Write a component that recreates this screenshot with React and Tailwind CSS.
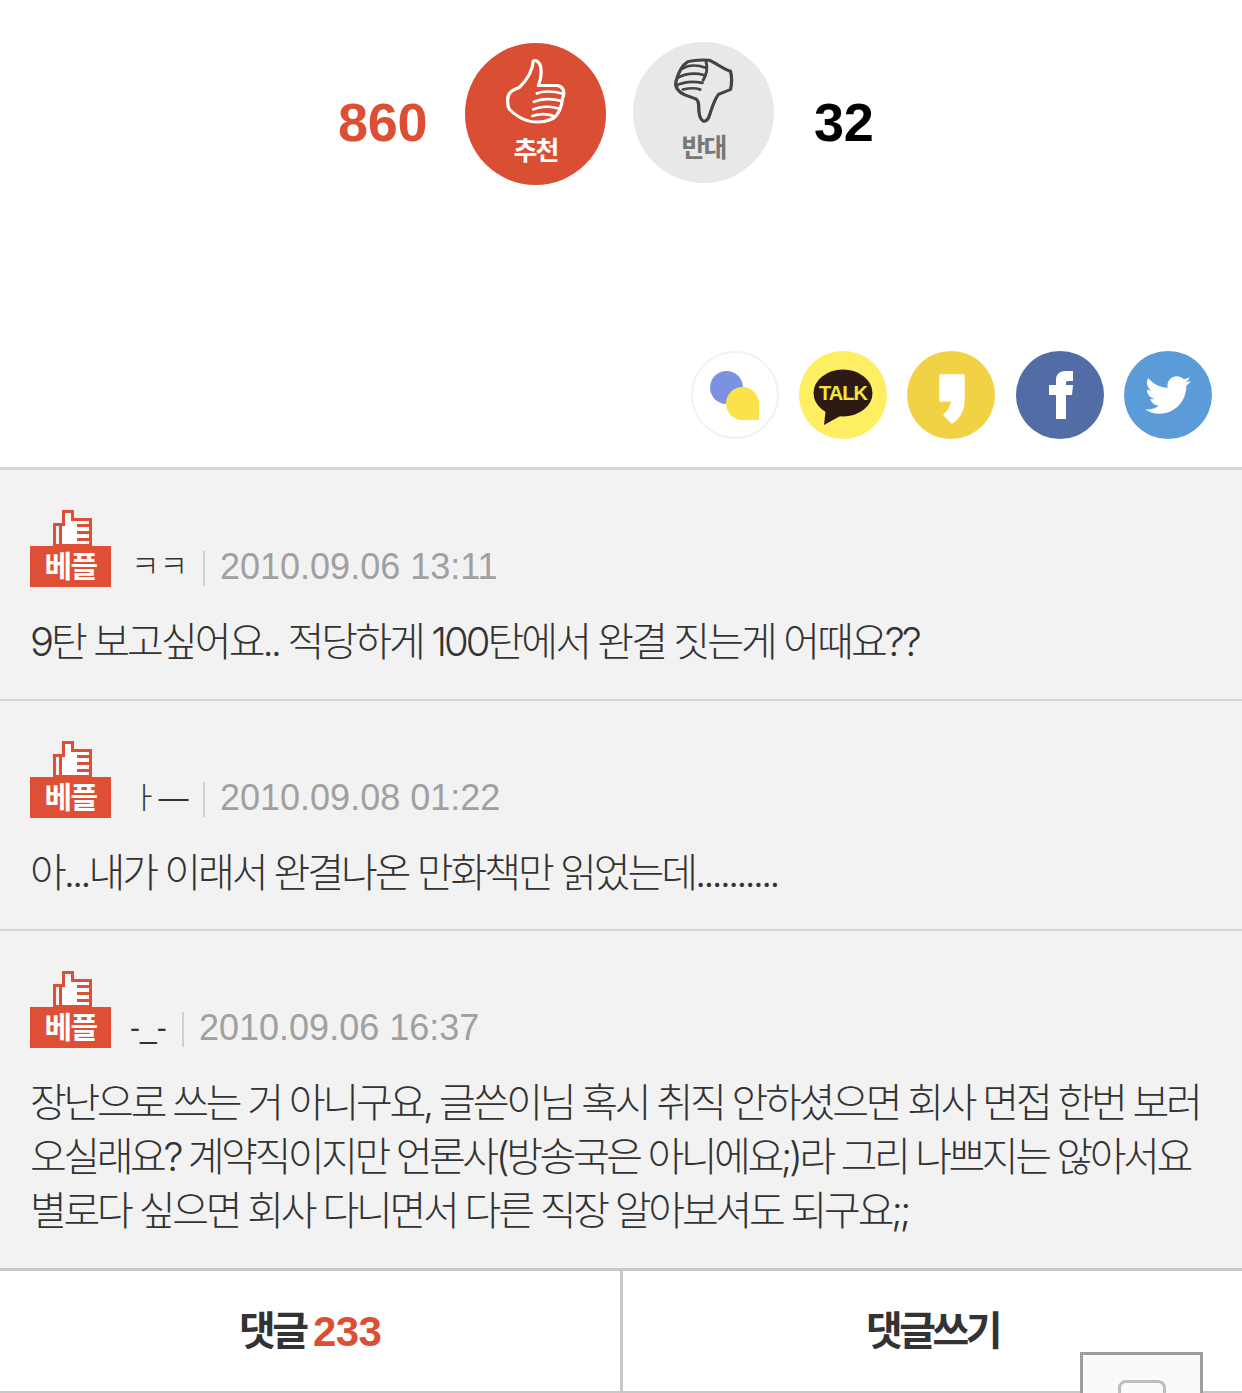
import React from "react";
import { FaTwitter } from "react-icons/fa";

const KR = "[font-family:'Liberation_Sans','Noto_Sans_CJK_KR',sans-serif]";
const BODY = "[font-family:'Inter','Noto_Sans_CJK_KR',sans-serif]";

function ThumbUp() {
  return (
    <svg viewBox="510 80 175 205" preserveAspectRatio="none" className="w-[64px] h-[68px]" fill="none" stroke="#fff" strokeWidth="9" strokeLinejoin="round" strokeLinecap="round">
      <path d="M520 215C518 190 530 180 552 172C572 150 588 125 590 92C598 88 606 95 610 108C614 130 610 150 604 166L655 166C672 168 678 185 670 205C668 230 662 250 645 265C625 275 600 278 582 274C560 270 535 250 525 238C520 230 520 222 520 215Z" />
      <path d="M600 190C615 182 645 182 668 190M592 215C612 205 645 205 665 212M590 238C610 228 640 228 660 235M588 258C605 250 630 250 645 258" strokeWidth="8" />
    </svg>
  );
}

function ThumbDown() {
  return (
    <svg viewBox="975 82 175 205" preserveAspectRatio="none" className="w-[64px] h-[68px]" fill="none" stroke="#444" strokeWidth="9" strokeLinejoin="round" strokeLinecap="round">
      <path d="M1060 275C1052 270 1048 255 1048 232C1048 220 1046 212 1040 208L1010 196C992 188 982 172 986 155C992 130 1000 108 1018 96C1040 90 1062 90 1078 92C1095 100 1115 118 1135 125C1140 145 1138 165 1135 180L1102 195C1088 215 1082 245 1075 265C1070 274 1065 277 1060 275Z" />
      <path d="M1068 95C1072 112 1070 135 1060 152M1002 118C1020 105 1045 105 1066 114M990 145C1015 130 1040 130 1062 136M986 168C1010 155 1035 155 1058 160M1005 180C1025 175 1040 175 1052 180" strokeWidth="8" />
    </svg>
  );
}

function Best() {
  return (
    <div className="flex flex-col items-center w-[81px] shrink-0">
      <svg viewBox="0 0 40 36" className="ml-[3px] w-[40px] h-[36px] block" shapeRendering="crispEdges">
        <path d="M2 35V14H8V35Z" fill="none" stroke="#de4f36" strokeWidth="3" />
        <path d="M8 14H11V1H20V9H38V35H8Z" fill="#fff" stroke="#de4f36" strokeWidth="3" />
        <path d="M25 15H38M25 22H38M25 29H38" stroke="#de4f36" strokeWidth="3" />
      </svg>
      <div className={`w-[81px] h-[41px] bg-[#de4f36] text-white text-[30px] font-bold leading-[41px] text-center tracking-[-1.5px] ${KR}`}>베플</div>
    </div>
  );
}

function Comment({ nick, nickClass, date, sepClass, boxClass, bodyClass, children }) {
  return (
    <div className={`bg-[#f2f2f2] border-[#d4d4d4] px-[30px] pt-[40px] ${boxClass}`}>
      <div className="flex items-end">
        <Best />
        <span className={`text-[#333] leading-[40px] font-light whitespace-nowrap ${nickClass} ${KR}`}>{nick}</span>
        <span className={`w-[2px] h-[35px] bg-[#cfcfcf] mb-[1px] ${sepClass}`} />
        <span className="text-[#a0a0a0] text-[36px] leading-[40px] font-['Liberation_Sans',sans-serif] ml-[15px]">{date}</span>
      </div>
      <p className={`mt-[28px] text-[#333] text-[40px] leading-[54px] font-light whitespace-nowrap ${bodyClass} ${BODY}`}>{children}</p>
    </div>
  );
}

export default function App() {
  return (
    <div className={`relative w-[1242px] h-[1393px] overflow-hidden bg-white ${KR}`}>
      <div className="h-[467px] flex flex-col border-b-[3px] border-[#d8d8d8] box-content">
        <div className="flex items-start pt-[42px] pl-[338px]">
          <span className="mt-[50px] w-[90px] text-[54px] leading-[60px] font-bold text-[#dc4f35] font-['Liberation_Sans',sans-serif] tracking-[-0.3px]">860</span>
          <div className="ml-[37px] mt-[1px] w-[141px] h-[142px] rounded-full bg-[#da4e33] flex flex-col items-center pt-[14px]">
            <ThumbUp />
            <span className="mt-[10px] text-white text-[26px] leading-[32px] font-bold tracking-[-2px]">추천</span>
          </div>
          <div className="ml-[27px] w-[141px] h-[141px] rounded-full bg-[#e8e8e8] flex flex-col items-center pt-[15px]">
            <ThumbDown />
            <span className="mt-[7px] text-[#777] text-[26px] leading-[32px] font-bold tracking-[-2px]">반대</span>
          </div>
          <span className="ml-[40px] mt-[50px] text-[54px] leading-[60px] font-bold text-black font-['Liberation_Sans',sans-serif] tracking-[-0.3px]">32</span>
        </div>

        <div className="mt-auto mb-[28px] flex justify-end gap-[20px] pr-[30px]">
          <div className="relative w-[88px] h-[88px] rounded-full bg-white border-2 border-[#f1f1f1]">
            <span className="absolute left-[17px] top-[18px] w-[33px] h-[33px] rounded-full bg-[#7b92e2]" />
            <span className="absolute left-[33px] top-[34px] w-[33px] h-[33px] rounded-full rounded-br-[4px] bg-[#fae24a]" />
          </div>
          <div className="relative w-[88px] h-[88px] rounded-full bg-[#fdee62] flex items-center justify-center">
            <svg viewBox="0 0 60 56" className="absolute left-[14px] top-[18px] w-[60px] h-[56px]">
              <ellipse cx="30" cy="24" rx="29.5" ry="23.5" fill="#2d1a14" />
              <path d="M13 38L11 56L29 46Z" fill="#2d1a14" />
            </svg>
            <span className="relative -mt-[4px] text-[#f5e53f] text-[20px] leading-none font-bold tracking-[-1px] font-['Liberation_Sans',sans-serif]">TALK</span>
          </div>
          <div className="mr-[1px] w-[88px] h-[88px] rounded-full bg-[#f2d245] flex items-center justify-center">
            <svg viewBox="0 0 88 88" className="w-[88px] h-[88px]">
              <path d="M33 24H57V48C57 60 51 68 45 72L37 64C41 60 44 56 45 50H33Z" fill="#fff" stroke="#fff" strokeWidth="1.5" strokeLinejoin="round" />
            </svg>
          </div>
          <div className="w-[88px] h-[88px] rounded-full bg-[#526ca6]">
            <svg viewBox="0 0 88 88" className="w-[88px] h-[88px]">
              <path d="M40 68V44H33V34H40V29C40 23 44 20 50 20H57V30H52C50 30 50 31 50 33V34H57L56 44H50V68Z" fill="#fff" />
            </svg>
          </div>
          <div className="w-[88px] h-[88px] rounded-full bg-[#5b9bd8] flex items-center justify-center">
            <FaTwitter className="text-white w-[46px] h-[46px]" />
          </div>
        </div>
      </div>

      <Comment nick="ㅋㅋ" nickClass="text-[31px] ml-[20px] w-[54px]" sepClass="ml-[18px]" date="2010.09.06 13:11" boxClass="h-[231px] border-b-[2px]" bodyClass="tracking-[-2.95px]">
        9탄 보고싶어요.. 적당하게 100탄에서 완결 짓는게 어때요??
      </Comment>
      <Comment nick="ㅏ—" nickClass="text-[30px] ml-[20px] w-[52px]" sepClass="ml-[20px]" date="2010.09.08 01:22" boxClass="h-[230px] border-b-[2px]" bodyClass="tracking-[-3.05px]">
        아...내가 이래서 완결나온 만화책만 읽었는데..........
      </Comment>
      <Comment nick="-_-" nickClass="text-[30px] ml-[19px] w-[36px]" sepClass="ml-[16px]" date="2010.09.06 16:37" boxClass="h-[337px]" bodyClass="tracking-[-3.25px]">
        장난으로 쓰는 거 아니구요, 글쓴이님 혹시 취직 안하셨으면 회사 면접 한번 보러
        <br />
        <span className="tracking-[-3.45px]">오실래요? 계약직이지만 언론사(방송국은 아니에요;)라 그리 나쁘지는 않아서요</span>
        <br />
        별로다 싶으면 회사 다니면서 다른 직장 알아보셔도 되구요;;
      </Comment>

      <div className="h-[125px] flex bg-white border-t-[3px] border-b-[2px] border-[#c8c8c8]">
        <div className="w-[620px] flex items-center justify-center text-[40px] font-bold text-[#333] tracking-[-3.5px]">
          댓글&nbsp;<span className="text-[#dc4f35] font-['Liberation_Sans',sans-serif] tracking-[-0.7px] text-[42px]">233</span>
        </div>
        <div className="flex-1 border-l-[3px] border-[#c8c8c8] flex items-center justify-center text-[40px] font-bold text-[#333] tracking-[-3.5px]">
          댓글쓰기
        </div>
      </div>

      <div className="absolute left-[1080px] top-[1352px] w-[123px] h-[60px] bg-[#fafafa] border-[3px] border-[#9e9e9e]">
        <div className="mx-auto mt-[25px] w-[48px] h-[40px] rounded-[8px] border-[3px] border-[#bdbdbd]" />
      </div>
    </div>
  );
}
